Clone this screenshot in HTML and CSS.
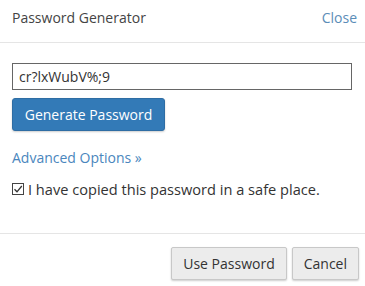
FILE: index.html
```html
<!DOCTYPE html>
<html>
<head>
<meta charset="utf-8">
<link rel="stylesheet" href="styles.css">
</head>
<body>
<div class="dialog">
  <div class="header">
    <span class="title">Password Generator</span>
    <a class="close">Close</a>
  </div>
  <div class="body">
    <input class="pw" type="text" value="cr?lxWubV%;9">
    <button class="btn-primary">Generate Password</button>
    <a class="adv">Advanced Options »</a>
    <label class="check"><span class="box"><svg width="10" height="10" viewBox="0 0 10 10"><path d="M1.5 5.2 L4 7.8 L8.8 2" fill="none" stroke="#333" stroke-width="1.3"/></svg></span>I have copied this password in a safe place.</label>
  </div>
  <div class="footer">
    <button class="btn">Use Password</button>
    <button class="btn">Cancel</button>
  </div>
</div>
</body>
</html>
```
FILE: styles.css
```css
html, body { margin: 0; padding: 0; background: #fff; }
body { font-family: "Open Sans", sans-serif; font-size: 14px; color: #333; }
.dialog { width: 365px; height: 286px; display: flex; flex-direction: column; }
.header { height: 43px; box-sizing: border-box; border-bottom: 1px solid #e5e5e5; display: flex; justify-content: space-between; align-items: flex-start; padding: 8px 8px 0 12px; }
.title { color: #444; font-size: 14px; line-height: 20px; }
.close { color: #5b8db8; font-size: 14px; line-height: 20px; }
.body { display: flex; flex-direction: column; align-items: flex-start; padding: 20px 12px 0 12px; height: 191px; box-sizing: border-box; border-bottom: 1px solid #e5e5e5; }
.pw { width: 340px; height: 27px; box-sizing: border-box; border: 1px solid #666; padding: 0 6px; font-family: "Open Sans", sans-serif; font-size: 14px; color: #333; margin: 0; outline: none; }
.btn-primary { margin-top: 8px; width: 153px; height: 33px; background: #337ab7; border: 1px solid #2e6da4; border-radius: 3px; color: #fff; font-family: "Open Sans", sans-serif; font-size: 14px; padding: 0; box-shadow: 0 1px 2px rgba(0,0,0,0.2); }
.adv { margin-top: 17px; color: #4a86bd; font-size: 14px; line-height: 20px; }
.check { margin-top: 11px; display: flex; align-items: center; font-size: 14.6px; line-height: 20px; color: #333; }
.box { width: 10px; height: 10px; border: 1px solid #444; margin-right: 4px; display: inline-flex; align-items: center; justify-content: center; }
.box svg { display: block; }
.footer { display: flex; justify-content: flex-end; gap: 5px; padding: 13px 6px 0 0; }
.btn { height: 33px; padding: 0 11px; background: #ececec; border: 1px solid #c8c8c8; border-radius: 2px; color: #333; font-family: "Open Sans", sans-serif; font-size: 14px; box-shadow: 0 1px 2px rgba(0,0,0,0.2); }
```
